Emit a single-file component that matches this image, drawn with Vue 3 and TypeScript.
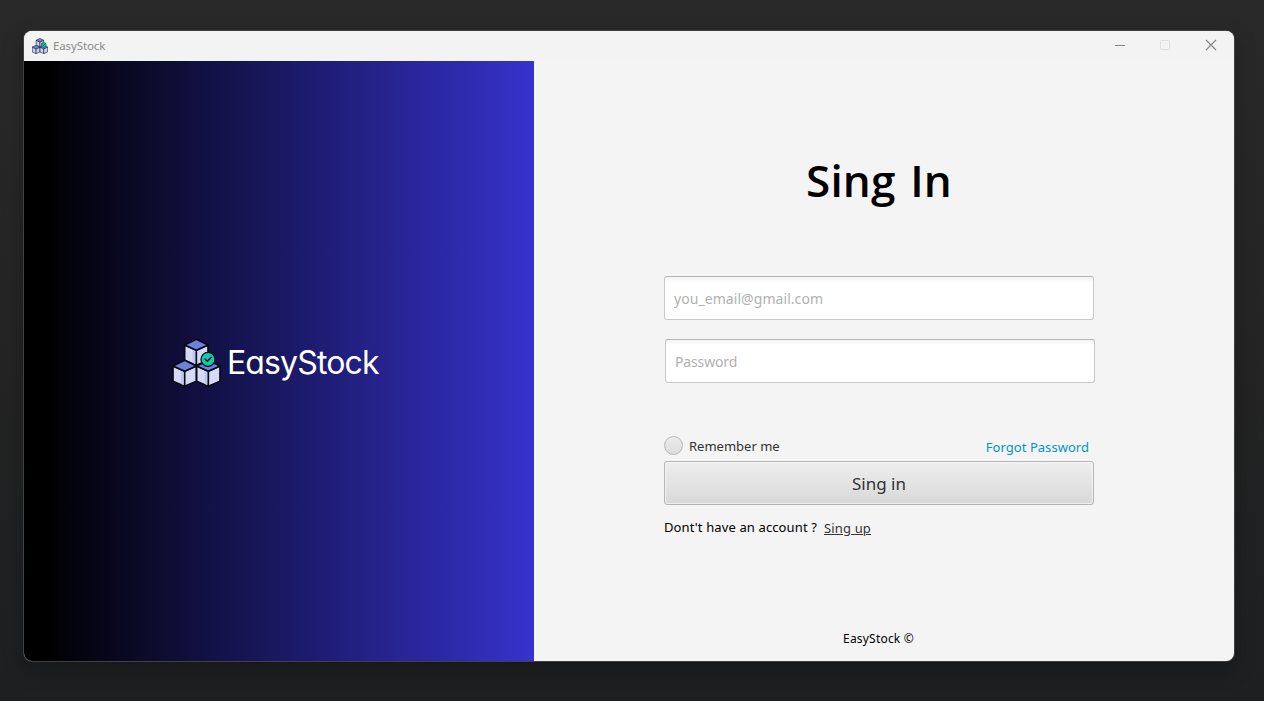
<script setup lang="ts">
import { ref } from 'vue'

interface Cube { x: number; y: number }

const email = ref('')
const password = ref('')
const remember = ref(false)

const cubes: Cube[] = [
  { x: 73, y: 4 },
  { x: 38, y: 67 },
  { x: 109, y: 67 },
]
</script>

<template>
  <div class="desktop">
    <main class="window">
      <header class="titlebar">
        <svg class="app-icon" viewBox="0 0 148 148">
          <g v-for="c in cubes" :key="c.x" :transform="`translate(${c.x} ${c.y})`" stroke="#2b2d48" stroke-width="6" stroke-linejoin="round">
            <path d="M-35 17L0 33V78L-35 63Z" fill="#c6cff4" />
            <path d="M35 17L0 33V78L35 63Z" fill="#c6cff4" />
            <path d="M0 0L35 17L0 33L-35 17Z" fill="#6e82dc" />
          </g>
          <circle cx="108" cy="64" r="24" fill="#0bbf9c" stroke="#1d3a45" stroke-width="4" />
          <path d="M98 64l8 7 13-14" fill="none" stroke="#17182b" stroke-width="5" />
        </svg>
        <span class="app-title">EasyStock</span>
        <div class="controls">
          <svg viewBox="0 0 46 30"><path d="M9 14.5H19" stroke="#858585" /></svg>
          <svg viewBox="0 0 45 30"><rect x="8.5" y="9.5" width="9" height="9" rx="1" fill="none" stroke="#dedede" /></svg>
          <svg viewBox="0 0 46 30"><path d="M9 9L19 19M19 9L9 19" stroke="#858585" stroke-width="1.1" /></svg>
        </div>
      </header>

      <div class="body">
        <aside class="brand">
          <svg class="logo" viewBox="0 0 150 150">
            <g v-for="c in cubes" :key="c.x" :transform="`translate(${c.x} ${c.y})`" stroke="#070a18" stroke-width="5" stroke-linejoin="round">
              <path d="M-35 17L0 33V78L-35 63Z" fill="#d6dbf5" />
              <path d="M35 17L0 33V78L35 63Z" fill="#d6dbf5" />
              <path d="M-3 35V74L-11 71V32Z" fill="#bdc7f0" stroke="none" />
              <path d="M0 0L35 17L0 33L-35 17Z" fill="#6c80dc" />
            </g>
            <circle cx="108" cy="64" r="21" fill="#10cda9" stroke="#070a18" stroke-width="4" />
            <path d="M99 63l7 7 12-12" fill="none" stroke="#070a18" stroke-width="4" stroke-linecap="round" />
          </svg>
          <span class="brand-name">EasyStock</span>
        </aside>

        <section class="panel">
          <form class="form" @submit.prevent>
            <h1>Sing In</h1>
            <input v-model="email" class="field" type="email" placeholder="you_email@gmail.com" />
            <input v-model="password" class="field field-password" type="password" placeholder="Password" />
            <div class="options">
              <label class="remember">
                <input v-model="remember" type="checkbox" />
                <span>Remember me</span>
              </label>
              <a class="forgot">Forgot Password</a>
            </div>
            <button type="submit">Sing in</button>
            <div class="signup">
              <span class="question">Dont't have an account ?</span>
              <a class="signup-link">Sing up</a>
            </div>
          </form>
          <footer>EasyStock ©</footer>
        </section>
      </div>
    </main>
  </div>
</template>

<style>
body { margin: 0; background: #202122; }
</style>

<style scoped>
.desktop {
  box-sizing: border-box;
  width: 1264px;
  height: 701px;
  padding: 31px 30px 40px 24px;
  overflow: hidden;
  background: linear-gradient(#292929, #242424 50%, #1d1f21);
  font-family: "Noto Sans", "Open Sans", sans-serif;
}
.window {
  width: 1210px;
  height: 630px;
  border-radius: 8px;
  overflow: hidden;
  background: #f4f4f4;
  box-shadow: 0 0 0 1px #414141, 0 8px 22px rgba(0, 0, 0, .28);
}
.titlebar {
  display: flex;
  align-items: center;
  height: 30px;
  padding-left: 8px;
  background: #f3f3f3;
}
.app-icon { width: 16px; height: 16px; margin-right: 5px; margin-bottom: 1px; }
.app-title { font-size: 11.5px; letter-spacing: -.12px; color: #8b8b8b; line-height: 28px; }
.controls { display: flex; margin-left: auto; margin-right: -9px; }
.controls svg { width: 46px; height: 30px; }
.controls svg:nth-child(2) { width: 45px; }
.body { display: flex; height: 600px; }
.brand {
  box-sizing: border-box;
  display: flex;
  align-items: flex-start;
  width: 510px;
  padding: 277px 0 0 148px;
  background: linear-gradient(90deg, #000 0%, #000 4%, #3632cd 100%);
}
.logo { width: 50px; height: 50px; flex: none; }
.brand-name {
  margin-left: 5px;
  font-family: Inter, Lato, sans-serif;
  font-feature-settings: "cv11";
  font-size: 32px;
  line-height: 50px;
  letter-spacing: -.87px;
  color: #fff;
}
.panel { display: flex; flex-direction: column; align-items: center; width: 700px; }
.form { display: flex; flex-direction: column; width: 430px; margin-left: -10px; }
h1 {
  height: 60px;
  margin: 89px 0 66px;
  text-align: center;
  font-family: "Open Sans", sans-serif;
  font-size: 44px;
  font-weight: 650;
  line-height: 60px;
  letter-spacing: .2px;
  word-spacing: 3px;
  color: #000;
}
.field {
  box-sizing: border-box;
  width: 430px;
  height: 44px;
  padding: 0 9px;
  border: 1px solid #c8c8c8;
  border-top-color: #b5b5b5;
  border-radius: 3px;
  outline: 0;
  background: linear-gradient(#f3f3f3, #fff 5px);
  font: 14px "Noto Sans", sans-serif;
  letter-spacing: .06px;
}
.field::placeholder { color: #b1b1b1; opacity: 1; }
.field-password { margin: 19px 0 0 1px; letter-spacing: -.15px; }
.options {
  display: flex;
  justify-content: space-between;
  height: 20px;
  margin-top: 53px;
  font-size: 13px;
  line-height: 20px;
}
.remember { display: flex; color: #323232; }
.remember input {
  appearance: none;
  box-sizing: border-box;
  width: 19px;
  height: 19px;
  margin: 0 6px 0 0;
  border: 1px solid #b8b8b8;
  border-radius: 50%;
  background: linear-gradient(#ececec, #dcdcdc);
}
.forgot { padding: 1px 5px 0 0; letter-spacing: .04px; color: #0096c9; }
button {
  height: 44px;
  margin-top: 5px;
  padding: 0;
  border: 1px solid #b5b5b5;
  border-radius: 3px;
  background: linear-gradient(#eee, #d9d9d9);
  box-shadow: inset 0 0 0 1px rgba(255, 255, 255, .55);
  font: 17px "Noto Sans", sans-serif;
  color: #333;
}
.signup { display: flex; margin-top: 12px; font-size: 13px; line-height: 20px; }
.question { letter-spacing: .12px; color: #000; }
.signup-link { margin: 1px 0 0 7px; letter-spacing: .15px; color: #333; text-decoration: underline; }
footer { margin: auto 11px 12px 0; font-size: 12px; line-height: 20px; letter-spacing: .2px; color: #000; }
</style>
